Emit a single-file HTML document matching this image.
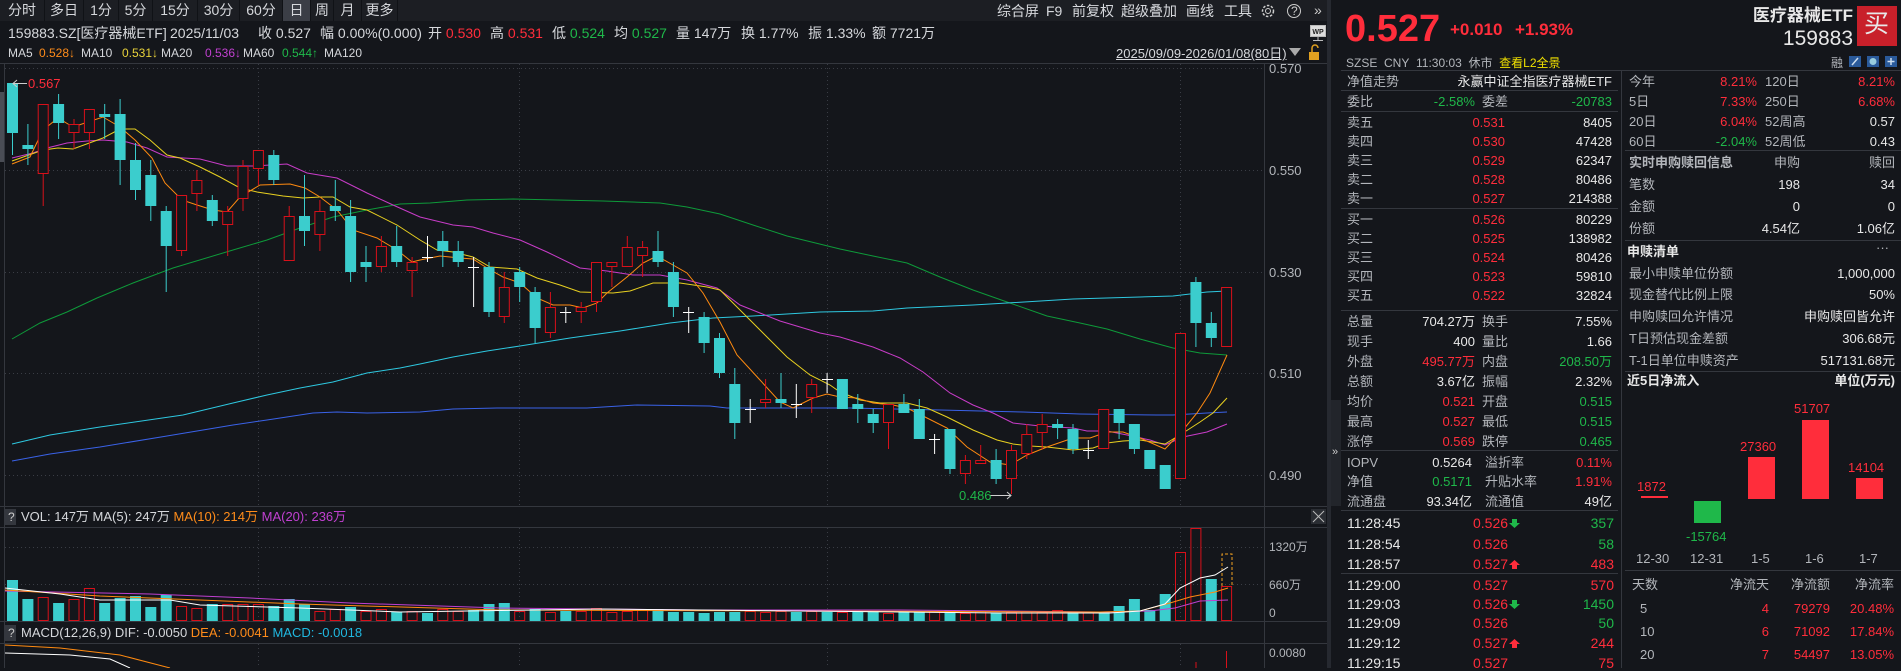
<!DOCTYPE html>
<html><head><meta charset="utf-8"><style>
*{margin:0;padding:0;box-sizing:border-box}
body{width:1901px;height:668px;background:#14161b;overflow:hidden;position:relative;font-family:"Liberation Sans","Noto Sans CJK SC",sans-serif;color:#d6d8dc}
.t{position:absolute;white-space:nowrap;line-height:1}
.f12{font-size:12px}.f13{font-size:13px}.f14{font-size:14px}
.g{color:#b3b6bb}.w{color:#e8e8e8}.r{color:#ff2d3b}.gr{color:#1fb84a}.y{color:#f0e000}.o{color:#ff8c1a}.yl{color:#e8d23a}.m{color:#c040d0}.cy{color:#20b8e0}
.bt{position:absolute;top:0;height:21px;font-size:14px;line-height:21px;text-align:center;color:#d6d8dc;border-right:1px solid #101216}
.R{text-align:right}
.b{font-weight:bold}
</style></head><body>
<svg width="1901" height="668" style="position:absolute;left:0;top:0">
<rect x="0" y="0" width="1328" height="21" fill="#1c1e23"/>
<rect x="283" y="0" width="28" height="21" fill="#3b3e46"/>
<rect x="0" y="92" width="4" height="70" fill="#4a4d55"/>
<g stroke="#34373e" stroke-width="1">
<line x1="0" y1="63.5" x2="1328" y2="63.5"/>
<line x1="0" y1="506.5" x2="1328" y2="506.5"/>
<line x1="0" y1="527.5" x2="1328" y2="527.5"/>
<line x1="0" y1="621.5" x2="1328" y2="621.5"/>
<line x1="0" y1="643.5" x2="1328" y2="643.5"/>
<line x1="1264.5" y1="63" x2="1264.5" y2="668"/>
<line x1="4.5" y1="63" x2="4.5" y2="668"/>
</g>
<rect x="1327" y="0" width="4" height="668" fill="#262930"/>
<g stroke="#3a3d45" stroke-dasharray="1,3">
<line x1="5" y1="68.5" x2="1264" y2="68.5"/><line x1="5" y1="170.5" x2="1264" y2="170.5"/><line x1="5" y1="272.5" x2="1264" y2="272.5"/><line x1="5" y1="373.5" x2="1264" y2="373.5"/><line x1="5" y1="475.5" x2="1264" y2="475.5"/>
<line x1="5" y1="547.5" x2="1264" y2="547.5"/><line x1="5" y1="584.5" x2="1264" y2="584.5"/>
<line x1="258.5" y1="64" x2="258.5" y2="506"/><line x1="519.5" y1="64" x2="519.5" y2="506"/><line x1="827.5" y1="64" x2="827.5" y2="506"/><line x1="1180.5" y1="64" x2="1180.5" y2="506"/>
<line x1="258.5" y1="528" x2="258.5" y2="621"/><line x1="519.5" y1="528" x2="519.5" y2="621"/><line x1="827.5" y1="528" x2="827.5" y2="621"/><line x1="1180.5" y1="528" x2="1180.5" y2="621"/>
<line x1="258.5" y1="644" x2="258.5" y2="668"/><line x1="519.5" y1="644" x2="519.5" y2="668"/><line x1="827.5" y1="644" x2="827.5" y2="668"/><line x1="1180.5" y1="644" x2="1180.5" y2="668"/>
</g>
<g fill="none" stroke-width="1">
<polyline stroke="#0e9a3a" points="12,339 40,323 67,312 97,298 133,283 173,268 233,250 267,240 300,228 333,217 367,210 400,204 430,203 467,200 513,199 603,201 660,203 687,207 720,214 753,225 787,236 840,249 873,256 907,263 940,277 973,290 1007,302 1047,316 1080,323 1107,329 1140,339 1173,348 1200,353 1227,355"/>
<polyline stroke="#2ec8e0" points="12,444 50,435 100,427 183,415 233,403 267,395 300,388 333,382 367,373 400,368 420,364 453,357 487,351 520,346 570,338 620,331 670,323 713,318 753,316 820,312 873,311 907,308 973,305 1007,303 1073,299 1140,297 1173,296 1207,292 1227,291"/>
<polyline stroke="#3a62e8" points="12,461 50,454 100,447 167,436 233,425 267,420 313,413 337,412 367,413 420,412 453,409 497,408 587,408 637,405 710,406 727,408 850,408 940,410 1023,412 1080,414 1157,415 1173,415 1207,413 1227,412"/>
<polyline stroke="#c83cc8" points="12,158 33,153 47,148 67,143 87,141 103,140 127,142 147,148 167,157 200,159 227,166 253,166 287,164 307,173 337,178 367,193 393,205 420,217 453,225 473,227 493,233 520,240 547,252 580,268 607,271 633,275 660,275 687,280 717,288 740,305 780,321 820,333 840,337 873,347 900,358 923,372 950,393 973,405 993,413 1013,423 1040,426 1073,428 1087,431 1107,431 1127,435 1150,440 1165,445 1183,437 1207,432 1227,424"/>
<polyline stroke="#e8d020" points="12,161 43,150 58,148 73,149 103,138 120,129 135,129 150,140 167,155 180,158 200,167 220,177 240,188 257,192 283,196 303,198 320,197 333,197 350,207 367,210 397,225 420,240 437,250 453,252 473,257 490,267 517,269 537,278 560,285 580,292 613,293 630,291 653,283 680,283 707,287 720,290 740,310 763,333 787,357 810,375 830,385 840,392 860,400 880,403 907,403 927,408 947,417 973,430 997,440 1013,444 1030,446 1047,447 1073,450 1093,448 1107,443 1123,441 1140,440 1165,444 1183,433 1200,422 1213,413 1227,398"/>
<polyline stroke="#ff8a10" points="12,164 30,157 43,130 58,118 73,127 88,122 103,117 120,127 135,140 152,158 165,183 182,200 197,205 213,210 227,212 240,197 260,185 290,184 305,188 320,197 337,210 353,230 377,238 397,250 412,262 420,260 440,256 460,258 473,259 487,268 503,277 520,283 537,298 553,305 570,305 583,308 597,303 607,293 627,277 643,263 657,256 673,265 687,273 703,293 720,322 737,355 760,380 780,402 793,408 813,398 827,394 840,397 857,398 873,403 893,405 907,408 927,418 947,428 967,447 990,462 1010,465 1027,455 1047,447 1073,438 1090,438 1107,432 1123,432 1140,438 1165,449 1183,430 1197,413 1210,393 1227,355"/>
</g>
<g stroke-width="1">
<g stroke="#3bcdcd" fill="#3bcdcd">
<line x1="12.5" y1="83" x2="12.5" y2="155"/><rect x="7" y="83" width="11" height="50" stroke="none"/>
<line x1="27.9" y1="124" x2="27.9" y2="165"/><rect x="22.4" y="145" width="11" height="4" stroke="none"/>
<line x1="58.6" y1="94" x2="58.6" y2="139"/><rect x="53.1" y="104" width="11" height="19" stroke="none"/>
<line x1="104.7" y1="104" x2="104.7" y2="139"/><rect x="99.2" y="114" width="11" height="3" stroke="none"/>
<line x1="120.1" y1="99" x2="120.1" y2="185"/><rect x="114.6" y="114" width="11" height="46" stroke="none"/>
<line x1="135.5" y1="143" x2="135.5" y2="200"/><rect x="130" y="160" width="11" height="30" stroke="none"/>
<line x1="150.8" y1="160" x2="150.8" y2="221"/><rect x="145.3" y="175" width="11" height="31" stroke="none"/>
<line x1="166.2" y1="206" x2="166.2" y2="292"/><rect x="160.7" y="211" width="11" height="35" stroke="none"/>
<line x1="212.3" y1="195" x2="212.3" y2="226"/><rect x="206.8" y="200" width="11" height="21" stroke="none"/>
<line x1="273.8" y1="150" x2="273.8" y2="185"/><rect x="268.3" y="155" width="11" height="25" stroke="none"/>
<line x1="304.5" y1="175" x2="304.5" y2="246"/><rect x="299" y="216" width="11" height="15" stroke="none"/>
<line x1="335.3" y1="180" x2="335.3" y2="221"/><rect x="329.8" y="206" width="11" height="5" stroke="none"/>
<line x1="350.6" y1="200" x2="350.6" y2="282"/><rect x="345.1" y="216" width="11" height="56" stroke="none"/>
<line x1="366" y1="246" x2="366" y2="282"/><rect x="360.5" y="262" width="11" height="5" stroke="none"/>
<line x1="396.7" y1="226" x2="396.7" y2="267"/><rect x="391.2" y="246" width="11" height="16" stroke="none"/>
<line x1="442.8" y1="231" x2="442.8" y2="267"/><rect x="437.3" y="241" width="11" height="10" stroke="none"/>
<line x1="458.2" y1="241" x2="458.2" y2="267"/><rect x="452.7" y="251" width="11" height="11" stroke="none"/>
<line x1="489" y1="262" x2="489" y2="317"/><rect x="483.5" y="267" width="11" height="45" stroke="none"/>
<line x1="519.7" y1="267" x2="519.7" y2="302"/><rect x="514.2" y="272" width="11" height="15" stroke="none"/>
<line x1="535.1" y1="287" x2="535.1" y2="343"/><rect x="529.6" y="292" width="11" height="36" stroke="none"/>
<line x1="658" y1="231" x2="658" y2="267"/><rect x="652.5" y="251" width="11" height="11" stroke="none"/>
<line x1="673.4" y1="262" x2="673.4" y2="317"/><rect x="667.9" y="272" width="11" height="35" stroke="none"/>
<line x1="704.1" y1="312" x2="704.1" y2="353"/><rect x="698.6" y="317" width="11" height="26" stroke="none"/>
<line x1="719.5" y1="333" x2="719.5" y2="378"/><rect x="714" y="338" width="11" height="35" stroke="none"/>
<line x1="734.8" y1="368" x2="734.8" y2="439"/><rect x="729.3" y="384" width="11" height="39" stroke="none"/>
<line x1="781" y1="373" x2="781" y2="408"/><rect x="775.5" y="399" width="11" height="4" stroke="none"/>
<rect x="836.9" y="379" width="11" height="30" stroke="none"/>
<line x1="857.8" y1="394" x2="857.8" y2="423"/><rect x="852.3" y="404" width="11" height="5" stroke="none"/>
<line x1="873.2" y1="409" x2="873.2" y2="433"/><rect x="867.7" y="414" width="11" height="9" stroke="none"/>
<line x1="903.9" y1="394" x2="903.9" y2="413"/><rect x="898.4" y="404" width="11" height="9" stroke="none"/>
<line x1="919.3" y1="399" x2="919.3" y2="439"/><rect x="913.8" y="409" width="11" height="30" stroke="none"/>
<line x1="950" y1="429" x2="950" y2="474"/><rect x="944.5" y="429" width="11" height="40" stroke="none"/>
<line x1="996.1" y1="449" x2="996.1" y2="484"/><rect x="990.6" y="460" width="11" height="19" stroke="none"/>
<line x1="1057.6" y1="419" x2="1057.6" y2="439"/><rect x="1052.1" y="424" width="11" height="4" stroke="none"/>
<line x1="1073" y1="424" x2="1073" y2="454"/><rect x="1067.5" y="429" width="11" height="20" stroke="none"/>
<line x1="1119.1" y1="409" x2="1119.1" y2="439"/><rect x="1113.6" y="409" width="11" height="14" stroke="none"/>
<line x1="1134.4" y1="424" x2="1134.4" y2="454"/><rect x="1128.9" y="424" width="11" height="25" stroke="none"/>
<rect x="1144.3" y="450" width="11" height="19" stroke="none"/>
<rect x="1159.7" y="465" width="11" height="24" stroke="none"/>
<line x1="1195.9" y1="277" x2="1195.9" y2="347"/><rect x="1190.4" y="282" width="11" height="41" stroke="none"/>
<line x1="1211.3" y1="312" x2="1211.3" y2="347"/><rect x="1205.8" y="323" width="11" height="15" stroke="none"/>
</g>
<g stroke="#d8101a" fill="#14161b">
<line x1="43.2" y1="104" x2="43.2" y2="206"/><rect x="38.2" y="104.5" width="10" height="69"/>
<line x1="74" y1="119" x2="74" y2="149"/><rect x="69" y="124.5" width="10" height="8"/>
<line x1="89.4" y1="109" x2="89.4" y2="149"/><rect x="84.4" y="109.5" width="10" height="23"/>
<line x1="181.6" y1="195" x2="181.6" y2="256"/><rect x="176.6" y="195.5" width="10" height="55"/>
<line x1="196.9" y1="170" x2="196.9" y2="211"/><rect x="191.9" y="180.5" width="10" height="13"/>
<line x1="227.7" y1="206" x2="227.7" y2="256"/><rect x="222.7" y="211.5" width="10" height="13"/>
<line x1="243" y1="160" x2="243" y2="211"/><rect x="238" y="166.5" width="10" height="32"/>
<line x1="258.4" y1="150" x2="258.4" y2="185"/><rect x="253.4" y="150.5" width="10" height="18"/>
<line x1="289.2" y1="206" x2="289.2" y2="261"/><rect x="284.2" y="216.5" width="10" height="44"/>
<line x1="319.9" y1="200" x2="319.9" y2="251"/><rect x="314.9" y="211.5" width="10" height="23"/>
<line x1="381.4" y1="236" x2="381.4" y2="272"/><rect x="376.4" y="246.5" width="10" height="20"/>
<line x1="412.1" y1="257" x2="412.1" y2="297"/><rect x="407.1" y="262.5" width="10" height="8"/>
<line x1="504.3" y1="272" x2="504.3" y2="323"/><rect x="499.3" y="287.5" width="10" height="29"/>
<line x1="550.4" y1="292" x2="550.4" y2="338"/><rect x="545.4" y="307.5" width="10" height="25"/>
<line x1="581.2" y1="302" x2="581.2" y2="323"/><rect x="576.2" y="307.5" width="10" height="4"/>
<line x1="596.5" y1="262" x2="596.5" y2="312"/><rect x="591.5" y="262.5" width="10" height="39"/>
<line x1="611.9" y1="262" x2="611.9" y2="287"/><rect x="606.9" y="262.5" width="10" height="4"/>
<line x1="627.3" y1="236" x2="627.3" y2="267"/><rect x="622.3" y="247.5" width="10" height="19"/>
<line x1="642.6" y1="241" x2="642.6" y2="277"/><rect x="637.6" y="247.5" width="10" height="8"/>
<line x1="765.6" y1="379" x2="765.6" y2="408"/><rect x="760.6" y="399.5" width="10" height="3"/>
<line x1="811.7" y1="379" x2="811.7" y2="413"/><rect x="806.7" y="384.5" width="10" height="13"/>
<line x1="888.5" y1="404" x2="888.5" y2="449"/><rect x="883.5" y="404.5" width="10" height="18"/>
<line x1="965.4" y1="455" x2="965.4" y2="484"/><rect x="960.4" y="460.5" width="10" height="13"/>
<line x1="980.7" y1="445" x2="980.7" y2="464"/><rect x="975.7" y="460.5" width="10" height="3"/>
<line x1="1011.5" y1="445" x2="1011.5" y2="494"/><rect x="1006.5" y="450.5" width="10" height="28"/>
<line x1="1026.8" y1="424" x2="1026.8" y2="459"/><rect x="1021.8" y="434.5" width="10" height="19"/>
<line x1="1042.2" y1="414" x2="1042.2" y2="449"/><rect x="1037.2" y="424.5" width="10" height="8"/>
<rect x="1098.7" y="409.5" width="10" height="39"/>
<rect x="1175.5" y="333.5" width="10" height="145"/>
<rect x="1221.6" y="287.5" width="10" height="59"/>
</g>
<g stroke="#ffffff">
<line x1="427.5" y1="236" x2="427.5" y2="262"/><line x1="422" y1="257.5" x2="433" y2="257.5"/>
<line x1="473.6" y1="257" x2="473.6" y2="307"/><line x1="468" y1="267.5" x2="479" y2="267.5"/>
<line x1="565.8" y1="307" x2="565.8" y2="323"/><line x1="560" y1="312.5" x2="571" y2="312.5"/>
<line x1="688.7" y1="307" x2="688.7" y2="333"/><line x1="683" y1="312.5" x2="694" y2="312.5"/>
<line x1="750.2" y1="399" x2="750.2" y2="423"/><line x1="745" y1="409.5" x2="756" y2="409.5"/>
<line x1="796.3" y1="384" x2="796.3" y2="418"/><line x1="791" y1="404.5" x2="802" y2="404.5"/>
<line x1="827.1" y1="373" x2="827.1" y2="393"/><line x1="822" y1="379.5" x2="833" y2="379.5"/>
<line x1="934.6" y1="434" x2="934.6" y2="454"/><line x1="929" y1="439.5" x2="940" y2="439.5"/>
<line x1="1088.3" y1="440" x2="1088.3" y2="459"/><line x1="1083" y1="450.5" x2="1094" y2="450.5"/>
</g>
</g>
<g stroke="#cfcfcf" fill="none"><line x1="13" y1="83.5" x2="27" y2="83.5"/><polyline points="17,80 13,83.5 17,87"/>
<line x1="990" y1="495.5" x2="1011" y2="495.5"/><polyline points="1007,492 1011,495.5 1007,499"/></g>
<g fill="#3bcdcd">
<rect x="7" y="580" width="11" height="41"/><rect x="22.4" y="599" width="11" height="22"/><rect x="53.1" y="603" width="11" height="18"/><rect x="99.2" y="603" width="11" height="18"/><rect x="114.6" y="598" width="11" height="23"/><rect x="130" y="596" width="11" height="25"/><rect x="145.3" y="607" width="11" height="14"/><rect x="160.7" y="595" width="11" height="26"/><rect x="206.8" y="604" width="11" height="17"/><rect x="268.3" y="606" width="11" height="15"/><rect x="283.7" y="599" width="11" height="22"/><rect x="299" y="604" width="11" height="17"/><rect x="345.1" y="607" width="11" height="14"/><rect x="391.2" y="612" width="11" height="9"/><rect x="422" y="613" width="11" height="8"/><rect x="468.1" y="610" width="11" height="11"/><rect x="483.5" y="604" width="11" height="17"/><rect x="498.8" y="603" width="11" height="18"/><rect x="529.6" y="609" width="11" height="12"/><rect x="560.3" y="611" width="11" height="10"/><rect x="652.5" y="609" width="11" height="12"/><rect x="667.9" y="612" width="11" height="9"/><rect x="683.2" y="612" width="11" height="9"/><rect x="698.6" y="613" width="11" height="8"/><rect x="714" y="612" width="11" height="9"/><rect x="729.3" y="612" width="11" height="9"/><rect x="790.8" y="612" width="11" height="9"/><rect x="821.6" y="612" width="11" height="9"/><rect x="852.3" y="612" width="11" height="9"/><rect x="867.7" y="611" width="11" height="10"/><rect x="898.4" y="612" width="11" height="9"/><rect x="913.8" y="612" width="11" height="9"/><rect x="944.5" y="610" width="11" height="11"/><rect x="990.6" y="613" width="11" height="8"/><rect x="1067.5" y="612" width="11" height="9"/><rect x="1098.7" y="612" width="11" height="9"/><rect x="1113.6" y="606" width="11" height="15"/><rect x="1128.9" y="599" width="11" height="22"/><rect x="1144.3" y="610" width="11" height="11"/><rect x="1159.7" y="594" width="11" height="27"/><rect x="1205.8" y="579" width="11" height="42"/>
</g>
<g fill="none" stroke="#d8101a">
<rect x="38.2" y="597.5" width="10" height="23"/><rect x="69" y="599.5" width="10" height="21"/><rect x="84.4" y="588.5" width="10" height="32"/><rect x="176.6" y="606.5" width="10" height="14"/><rect x="191.9" y="608.5" width="10" height="12"/><rect x="222.7" y="604.5" width="10" height="16"/><rect x="238" y="604.5" width="10" height="16"/><rect x="253.4" y="604.5" width="10" height="16"/><rect x="314.9" y="611.5" width="10" height="9"/><rect x="330.3" y="609.5" width="10" height="11"/><rect x="361" y="611.5" width="10" height="9"/><rect x="376.4" y="609.5" width="10" height="11"/><rect x="407.1" y="611.5" width="10" height="9"/><rect x="437.8" y="609.5" width="10" height="11"/><rect x="453.2" y="611.5" width="10" height="9"/><rect x="514.7" y="611.5" width="10" height="9"/><rect x="545.4" y="612.5" width="10" height="8"/><rect x="576.2" y="611.5" width="10" height="9"/><rect x="591.5" y="608.5" width="10" height="12"/><rect x="606.9" y="612.5" width="10" height="8"/><rect x="622.3" y="611.5" width="10" height="9"/><rect x="637.6" y="610.5" width="10" height="10"/><rect x="745.2" y="611.5" width="10" height="9"/><rect x="760.6" y="612.5" width="10" height="8"/><rect x="776" y="611.5" width="10" height="9"/><rect x="806.7" y="611.5" width="10" height="9"/><rect x="837.4" y="612.5" width="10" height="8"/><rect x="883.5" y="613.5" width="10" height="7"/><rect x="929.6" y="611.5" width="10" height="9"/><rect x="960.4" y="613.5" width="10" height="7"/><rect x="975.7" y="611.5" width="10" height="9"/><rect x="1006.5" y="612.5" width="10" height="8"/><rect x="1021.8" y="611.5" width="10" height="9"/><rect x="1037.2" y="612.5" width="10" height="8"/><rect x="1052.6" y="610.5" width="10" height="10"/><rect x="1083.3" y="612.5" width="10" height="8"/><rect x="1175.5" y="552.5" width="10" height="68"/><rect x="1190.9" y="528.5" width="10" height="92"/><rect x="1221.6" y="586.5" width="10" height="34"/>
</g>
<polyline fill="none" stroke="#f0a020" stroke-dasharray="3,2" points="1222,586 1222,554 1232,554 1232,586"/>
<g fill="none">
<polyline stroke="#c040d0" points="5,591 150,594 250,598 350,603 500,608 700,610 900,610 1100,612 1150,611 1175,608 1200,601 1228,600"/>
<polyline stroke="#ff8a10" points="5,590 100,596 200,600 300,604 500,610 800,611 1100,612 1140,611 1170,603 1190,597 1215,592 1228,588"/>
<polyline stroke="#ffffff" points="5,588 60,594 100,600 170,600 200,605 300,608 400,612 600,609 800,611 1000,613 1110,613 1140,611 1165,604 1180,588 1200,578 1215,575 1228,567"/>
<polyline stroke="#ff8a10" points="5,645 60,648 120,655 170,668"/>
<polyline stroke="#ffffff" points="5,653 70,655 110,659 130,668"/>
</g>
<g stroke="#d8101a"><line x1="1196" y1="662" x2="1196" y2="668"/><line x1="1226.5" y1="651" x2="1226.5" y2="668"/></g>
<rect x="5" y="509" width="11" height="16" fill="#34373e"/><rect x="5" y="625" width="11" height="16" fill="#34373e"/>
<rect x="1311" y="509" width="15" height="15" fill="#2a2d33"/><g stroke="#bbb"><line x1="1313" y1="511" x2="1324" y2="522"/><line x1="1324" y1="511" x2="1313" y2="522"/></g>
<rect x="1310.5" y="25.5" width="15" height="11" fill="#ddd" stroke="#bbb"/><line x1="1318" y1="37" x2="1318" y2="40" stroke="#bbb"/><line x1="1313" y1="40.5" x2="1323" y2="40.5" stroke="#bbb"/>
<text x="1318" y="34" font-size="7" font-weight="bold" fill="#222" text-anchor="middle" font-family="Liberation Sans">WP</text>
<polygon points="1289,48 1301,48 1295,56" fill="#aaa"/>
<rect x="1309" y="52" width="10" height="8" fill="#e0a020"/><path d="M1312 52 V48 a3 3 0 0 1 6 0" stroke="#e0a020" fill="none" stroke-width="1.5"/>
<circle cx="1268" cy="11" r="5.5" fill="none" stroke="#ccc" stroke-width="1.5" stroke-dasharray="2.5,1.6"/><circle cx="1268" cy="11" r="2.5" fill="none" stroke="#ccc"/>
<circle cx="1294" cy="11" r="6.5" fill="none" stroke="#ccc"/>
<rect x="1331" y="400" width="10" height="106" fill="#22252b"/>
<g stroke="#34373e">
<line x1="1341" y1="70.5" x2="1901" y2="70.5"/>
<line x1="1621.5" y1="71" x2="1621.5" y2="668"/>
<line x1="1341" y1="90.5" x2="1618" y2="90.5"/><line x1="1341" y1="111.5" x2="1618" y2="111.5"/><line x1="1341" y1="208.5" x2="1618" y2="208.5"/><line x1="1341" y1="310.5" x2="1618" y2="310.5"/><line x1="1341" y1="450.5" x2="1618" y2="450.5"/><line x1="1341" y1="510.5" x2="1618" y2="510.5"/><line x1="1341" y1="573.5" x2="1618" y2="573.5"/>
<line x1="1625" y1="150.5" x2="1901" y2="150.5"/><line x1="1625" y1="240.5" x2="1901" y2="240.5"/><line x1="1625" y1="371.5" x2="1901" y2="371.5"/><line x1="1625" y1="570.5" x2="1901" y2="570.5"/>
</g>
<rect x="1857" y="6" width="40" height="40" fill="#c8202a"/>
<rect x="1849" y="56" width="12" height="11" fill="#2a5a9a"/><rect x="1867" y="56" width="12" height="11" fill="#2a5a9a"/><rect x="1885" y="56" width="12" height="11" fill="#2a5a9a"/>
<line x1="1852" y1="65" x2="1858" y2="58" stroke="#cde" stroke-width="1.5"/><circle cx="1873" cy="61.5" r="3.5" fill="#9cd"/><g stroke="#cde" stroke-width="1.5"><line x1="1891" y1="58" x2="1891" y2="65"/><line x1="1887.5" y1="61.5" x2="1894.5" y2="61.5"/></g>
<line x1="1641" y1="497" x2="1668" y2="497" stroke="#ff2d3b" stroke-width="2"/>
<rect x="1694" y="501" width="27" height="22" fill="#1fb84a"/>
<rect x="1748" y="457" width="27" height="42" fill="#ff2d3b"/>
<rect x="1802" y="420" width="27" height="79" fill="#ff2d3b"/>
<rect x="1856" y="478" width="27" height="21" fill="#ff2d3b"/>
<g fill="#1fb84a"><polygon points="1512,519 1517,519 1517,523 1520,523 1514.5,528 1509,523 1512,523"/><polygon points="1512,600 1517,600 1517,604 1520,604 1514.5,609 1509,604 1512,604"/></g>
<g fill="#ff2d3b"><polygon points="1514.5,560 1520,565 1517,565 1517,569 1512,569 1512,565 1509,565"/><polygon points="1514.5,639 1520,644 1517,644 1517,648 1512,648 1512,644 1509,644"/></g>
</svg>

<div class="bt" style="left:0;width:45px">分时</div><div class="bt" style="left:45px;width:39px">多日</div><div class="bt" style="left:84px;width:35px">1分</div><div class="bt" style="left:119px;width:34px">5分</div><div class="bt" style="left:153px;width:45px">15分</div><div class="bt" style="left:198px;width:42px">30分</div><div class="bt" style="left:240px;width:43px">60分</div>
<div class="bt" style="left:283px;width:28px">日</div><div class="bt" style="left:311px;width:23px">周</div><div class="bt" style="left:334px;width:28px">月</div><div class="bt" style="left:362px;width:36px">更多</div>
<div class="t f14" style="left:997px;top:4px">综合屏</div><div class="t f14" style="left:1046px;top:4px">F9</div><div class="t f14" style="left:1072px;top:4px">前复权</div><div class="t f14" style="left:1121px;top:4px">超级叠加</div><div class="t f14" style="left:1186px;top:4px">画线</div><div class="t f14" style="left:1224px;top:4px">工具</div><div class="t f12" style="left:1291px;top:5px;color:#ccc">?</div><div class="t f14" style="left:1314px;top:3px;color:#ccc">»</div>
<div class="t f14" style="left:8px;top:26px">159883.SZ[医疗器械ETF]</div>
<div class="t f14" style="left:170px;top:26px">2025/11/03</div>
<div class="t f14" style="left:258px;top:26px">收 0.527</div>
<div class="t f14" style="left:320px;top:26px">幅 0.00%(0.000)</div>
<div class="t f14" style="left:428px;top:26px">开 <span class="r">0.530</span></div>
<div class="t f14" style="left:490px;top:26px">高 <span class="r">0.531</span></div>
<div class="t f14" style="left:552px;top:26px">低 <span class="gr">0.524</span></div>
<div class="t f14" style="left:614px;top:26px">均 <span class="gr">0.527</span></div>
<div class="t f14" style="left:676px;top:26px">量 147万</div>
<div class="t f14" style="left:741px;top:26px">换 1.77%</div>
<div class="t f14" style="left:808px;top:26px">振 1.33%</div>
<div class="t f14" style="left:872px;top:26px">额 7721万</div>
<div class="t f12" style="left:8px;top:47px">MA5</div><div class="t f12 o" style="left:39px;top:47px">0.528↓</div>
<div class="t f12" style="left:81px;top:47px">MA10</div><div class="t f12 yl" style="left:122px;top:47px">0.531↓</div>
<div class="t f12" style="left:161px;top:47px">MA20</div><div class="t f12 m" style="left:205px;top:47px">0.536↓</div>
<div class="t f12" style="left:243px;top:47px">MA60</div><div class="t f12 gr" style="left:282px;top:47px">0.544↑</div>
<div class="t f12" style="left:324px;top:47px">MA120</div>
<div class="t f13" style="left:1116px;top:47px;text-decoration:underline">2025/09/09-2026/01/08(80日)</div>
<div class="t f13 g" style="left:1269px;top:62px">0.570</div><div class="t f13 g" style="left:1269px;top:164px">0.550</div><div class="t f13 g" style="left:1269px;top:266px">0.530</div><div class="t f13 g" style="left:1269px;top:367px">0.510</div><div class="t f13 g" style="left:1269px;top:469px">0.490</div>
<div class="t f12 g" style="left:1269px;top:541px">1320万</div><div class="t f12 g" style="left:1269px;top:579px">660万</div><div class="t f12 g" style="left:1269px;top:607px">0</div><div class="t f12 g" style="left:1269px;top:647px">0.0080</div>
<div class="t f13 r" style="left:28px;top:77px">0.567</div>
<div class="t f13 gr" style="left:959px;top:489px">0.486</div>
<div class="t f12" style="left:8px;top:511px;color:#ccc">?</div><div class="t f12" style="left:8px;top:627px;color:#ccc">?</div>
<div class="t f13" style="left:21px;top:510px">VOL: 147万 MA(5): 247万 <span class="o">MA(10): 214万</span> <span class="m">MA(20): 236万</span></div>
<div class="t f13" style="left:21px;top:626px">MACD(12,26,9) DIF: -0.0050 <span class="o">DEA: -0.0041</span> <span class="cy">MACD: -0.0018</span></div>
<div class="t b r" style="left:1345px;top:10px;font-size:38px">0.527</div>
<div class="t b r" style="left:1450px;top:21px;font-size:17px">+0.010</div>
<div class="t b r" style="left:1515px;top:21px;font-size:17px">+1.93%</div>
<div class="t b w" style="right:48px;top:7px;font-size:17px">医疗器械ETF</div>
<div class="t w" style="right:48px;top:28px;font-size:21px">159883</div>
<div class="t w" style="left:1864px;top:12px;font-size:25px">买</div>
<div class="t f12 g" style="left:1346px;top:57px">SZSE&nbsp;&nbsp;CNY&nbsp;&nbsp;11:30:03&nbsp;&nbsp;休市&nbsp;&nbsp;<span class="y">查看L2全景</span></div>
<div class="t f12 g" style="left:1831px;top:57px">融</div>
<div class="f13 g">
<div class="t" style="left:1347px;top:75px">净值走势</div><div class="t" style="left:1347px;top:95px">委比</div><div class="t" style="left:1482px;top:95px">委差</div>
<div class="t" style="left:1347px;top:116px">卖五</div><div class="t" style="left:1347px;top:135px">卖四</div><div class="t" style="left:1347px;top:154px">卖三</div><div class="t" style="left:1347px;top:173px">卖二</div><div class="t" style="left:1347px;top:192px">卖一</div>
<div class="t" style="left:1347px;top:213px">买一</div><div class="t" style="left:1347px;top:232px">买二</div><div class="t" style="left:1347px;top:251px">买三</div><div class="t" style="left:1347px;top:270px">买四</div><div class="t" style="left:1347px;top:289px">买五</div>
<div class="t" style="left:1347px;top:315px">总量</div><div class="t" style="left:1347px;top:335px">现手</div><div class="t" style="left:1347px;top:355px">外盘</div><div class="t" style="left:1347px;top:375px">总额</div><div class="t" style="left:1347px;top:395px">均价</div><div class="t" style="left:1347px;top:415px">最高</div><div class="t" style="left:1347px;top:435px">涨停</div>
<div class="t" style="left:1482px;top:315px">换手</div><div class="t" style="left:1482px;top:335px">量比</div><div class="t" style="left:1482px;top:355px">内盘</div><div class="t" style="left:1482px;top:375px">振幅</div><div class="t" style="left:1482px;top:395px">开盘</div><div class="t" style="left:1482px;top:415px">最低</div><div class="t" style="left:1482px;top:435px">跌停</div>
<div class="t" style="left:1347px;top:456px">IOPV</div><div class="t" style="left:1347px;top:475px">净值</div><div class="t" style="left:1347px;top:495px">流通盘</div>
<div class="t" style="left:1485px;top:456px">溢折率</div><div class="t" style="left:1485px;top:475px">升贴水率</div><div class="t" style="left:1485px;top:495px">流通值</div>
</div>
<div class="f13 w">
<div class="t R" style="right:289px;top:75px">永赢中证全指医疗器械ETF</div>
<div class="t R gr" style="right:426px;top:95px">-2.58%</div><div class="t R gr" style="right:289px;top:95px">-20783</div>
<div class="t R r" style="right:396px;top:116px">0.531</div><div class="t R r" style="right:396px;top:135px">0.530</div><div class="t R r" style="right:396px;top:154px">0.529</div><div class="t R r" style="right:396px;top:173px">0.528</div><div class="t R r" style="right:396px;top:192px">0.527</div>
<div class="t R r" style="right:396px;top:213px">0.526</div><div class="t R r" style="right:396px;top:232px">0.525</div><div class="t R r" style="right:396px;top:251px">0.524</div><div class="t R r" style="right:396px;top:270px">0.523</div><div class="t R r" style="right:396px;top:289px">0.522</div>
<div class="t R" style="right:289px;top:116px">8405</div><div class="t R" style="right:289px;top:135px">47428</div><div class="t R" style="right:289px;top:154px">62347</div><div class="t R" style="right:289px;top:173px">80486</div><div class="t R" style="right:289px;top:192px">214388</div>
<div class="t R" style="right:289px;top:213px">80229</div><div class="t R" style="right:289px;top:232px">138982</div><div class="t R" style="right:289px;top:251px">80426</div><div class="t R" style="right:289px;top:270px">59810</div><div class="t R" style="right:289px;top:289px">32824</div>
<div class="t R" style="right:426px;top:315px">704.27万</div><div class="t R" style="right:426px;top:335px">400</div><div class="t R r" style="right:426px;top:355px">495.77万</div><div class="t R" style="right:426px;top:375px">3.67亿</div><div class="t R r" style="right:426px;top:395px">0.521</div><div class="t R r" style="right:426px;top:415px">0.527</div><div class="t R r" style="right:426px;top:435px">0.569</div>
<div class="t R" style="right:289px;top:315px">7.55%</div><div class="t R" style="right:289px;top:335px">1.66</div><div class="t R gr" style="right:289px;top:355px">208.50万</div><div class="t R" style="right:289px;top:375px">2.32%</div><div class="t R gr" style="right:289px;top:395px">0.515</div><div class="t R gr" style="right:289px;top:415px">0.515</div><div class="t R gr" style="right:289px;top:435px">0.465</div>
<div class="t R" style="right:429px;top:456px">0.5264</div><div class="t R gr" style="right:429px;top:475px">0.5171</div><div class="t R" style="right:429px;top:495px">93.34亿</div>
<div class="t R r" style="right:289px;top:456px">0.11%</div><div class="t R r" style="right:289px;top:475px">1.91%</div><div class="t R" style="right:289px;top:495px">49亿</div>
</div>
<div style="font-size:14px">
<div class="t w" style="left:1347px;top:516px">11:28:45</div><div class="t w" style="left:1347px;top:537px">11:28:54</div><div class="t w" style="left:1347px;top:557px">11:28:57</div>
<div class="t w" style="left:1347px;top:578px">11:29:00</div><div class="t w" style="left:1347px;top:597px">11:29:03</div><div class="t w" style="left:1347px;top:616px">11:29:09</div><div class="t w" style="left:1347px;top:636px">11:29:12</div><div class="t w" style="left:1347px;top:656px">11:29:15</div>
<div class="t r" style="left:1473px;top:516px">0.526</div><div class="t r" style="left:1473px;top:537px">0.526</div><div class="t r" style="left:1473px;top:557px">0.527</div><div class="t r" style="left:1473px;top:578px">0.527</div><div class="t r" style="left:1473px;top:597px">0.526</div><div class="t r" style="left:1473px;top:616px">0.526</div><div class="t r" style="left:1473px;top:636px">0.527</div><div class="t r" style="left:1473px;top:656px">0.527</div>
<div class="t R gr" style="right:287px;top:516px">357</div><div class="t R gr" style="right:287px;top:537px">58</div><div class="t R r" style="right:287px;top:557px">483</div><div class="t R r" style="right:287px;top:578px">570</div><div class="t R gr" style="right:287px;top:597px">1450</div><div class="t R gr" style="right:287px;top:616px">50</div><div class="t R r" style="right:287px;top:636px">244</div><div class="t R r" style="right:287px;top:656px">75</div>
</div>
<div class="f13">
<div class="t g" style="left:1629px;top:75px">今年</div><div class="t g" style="left:1629px;top:95px">5日</div><div class="t g" style="left:1629px;top:115px">20日</div><div class="t g" style="left:1629px;top:135px">60日</div>
<div class="t R r" style="right:144px;top:75px">8.21%</div><div class="t R r" style="right:144px;top:95px">7.33%</div><div class="t R r" style="right:144px;top:115px">6.04%</div><div class="t R gr" style="right:144px;top:135px">-2.04%</div>
<div class="t g" style="left:1765px;top:75px">120日</div><div class="t g" style="left:1765px;top:95px">250日</div><div class="t g" style="left:1765px;top:115px">52周高</div><div class="t g" style="left:1765px;top:135px">52周低</div>
<div class="t R r" style="right:6px;top:75px">8.21%</div><div class="t R r" style="right:6px;top:95px">6.68%</div><div class="t R w" style="right:6px;top:115px">0.57</div><div class="t R w" style="right:6px;top:135px">0.43</div>
<div class="t g b" style="left:1629px;top:156px">实时申购赎回信息</div><div class="t R g" style="right:101px;top:156px">申购</div><div class="t R g" style="right:6px;top:156px">赎回</div>
<div class="t g" style="left:1629px;top:178px">笔数</div><div class="t R w" style="right:101px;top:178px">198</div><div class="t R w" style="right:6px;top:178px">34</div>
<div class="t g" style="left:1629px;top:200px">金额</div><div class="t R w" style="right:101px;top:200px">0</div><div class="t R w" style="right:6px;top:200px">0</div>
<div class="t g" style="left:1629px;top:222px">份额</div><div class="t R w" style="right:101px;top:222px">4.54亿</div><div class="t R w" style="right:6px;top:222px">1.06亿</div>
<div class="t w b" style="left:1627px;top:245px">申赎清单</div><div class="t g" style="left:1876px;top:241px">···</div>
<div class="t g" style="left:1629px;top:267px">最小申赎单位份额</div><div class="t R w" style="right:6px;top:267px">1,000,000</div>
<div class="t g" style="left:1629px;top:288px">现金替代比例上限</div><div class="t R w" style="right:6px;top:288px">50%</div>
<div class="t g" style="left:1629px;top:310px">申购赎回允许情况</div><div class="t R w" style="right:6px;top:310px">申购赎回皆允许</div>
<div class="t g" style="left:1629px;top:332px">T日预估现金差额</div><div class="t R w" style="right:6px;top:332px">306.68元</div>
<div class="t g" style="left:1629px;top:354px">T-1日单位申赎资产</div><div class="t R w" style="right:6px;top:354px">517131.68元</div>
<div class="t w b" style="left:1627px;top:374px">近5日净流入</div><div class="t R w b" style="right:6px;top:374px">单位(万元)</div>
<div class="t r" style="left:1637px;top:480px">1872</div><div class="t gr" style="left:1686px;top:530px">-15764</div><div class="t r" style="left:1740px;top:440px">27360</div><div class="t r" style="left:1794px;top:402px">51707</div><div class="t r" style="left:1848px;top:461px">14104</div>
<div class="t g" style="left:1636px;top:552px">12-30</div><div class="t g" style="left:1690px;top:552px">12-31</div><div class="t g" style="left:1751px;top:552px">1-5</div><div class="t g" style="left:1805px;top:552px">1-6</div><div class="t g" style="left:1859px;top:552px">1-7</div>
<div class="t g" style="left:1632px;top:578px">天数</div><div class="t R g" style="right:132px;top:578px">净流天</div><div class="t R g" style="right:71px;top:578px">净流额</div><div class="t R g" style="right:7px;top:578px">净流率</div>
<div class="t g" style="left:1640px;top:602px">5</div><div class="t R r" style="right:132px;top:602px">4</div><div class="t R r" style="right:71px;top:602px">79279</div><div class="t R r" style="right:7px;top:602px">20.48%</div>
<div class="t g" style="left:1640px;top:625px">10</div><div class="t R r" style="right:132px;top:625px">6</div><div class="t R r" style="right:71px;top:625px">71092</div><div class="t R r" style="right:7px;top:625px">17.84%</div>
<div class="t g" style="left:1640px;top:648px">20</div><div class="t R r" style="right:132px;top:648px">7</div><div class="t R r" style="right:71px;top:648px">54497</div><div class="t R r" style="right:7px;top:648px">13.05%</div>
</div>
<div class="t" style="left:1332px;top:447px;font-size:11px;color:#ccc">»</div>
</body></html>
